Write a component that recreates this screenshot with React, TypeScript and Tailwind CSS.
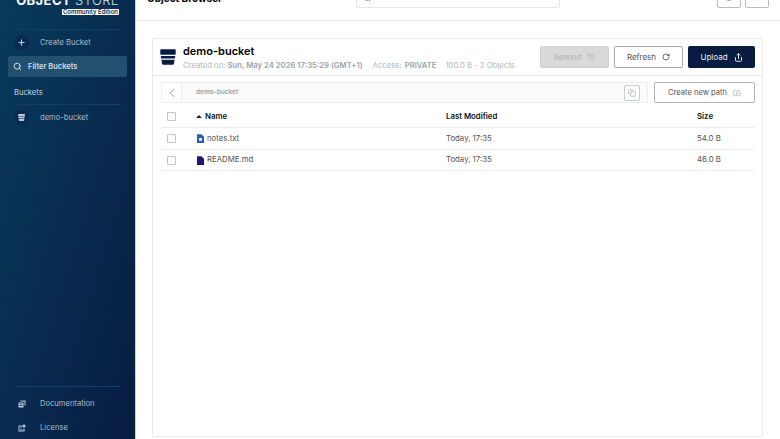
import { ChevronLeft, Copy, History, Plus, RotateCw, Search, Share, HelpCircle, User, FolderPlus } from 'lucide-react'

function BucketIcon({ className }: { className?: string }) {
  return (
    <svg viewBox="0 0 16 16" className={className} fill="currentColor">
      <path d="M0.3 1c0-.5.3-.8.8-.8h13.8c.5 0 .8.3.8.8v3.8l-.2.9H.5l-.2-.9z" />
      <path d="M.8 6.9h14.4l-.4 2.7H1.2z" />
      <path d="M1.4 10.8h13.2l-.7 4.2c-.1.5-.5.8-1 .8H3.1c-.5 0-.9-.3-1-.8z" />
    </svg>
  )
}

function DocsIcon({ className }: { className?: string }) {
  return (
    <svg viewBox="0 0 16 16" className={className} fill="currentColor">
      <path d="M5 1h10v10h-2V3H5z" />
      <path d="M1 5h10v10H1zm2 2v1.5h6V7zm0 3v1.5h6V10z" fillRule="evenodd" />
    </svg>
  )
}

function LicenseIcon({ className }: { className?: string }) {
  return (
    <svg viewBox="0 0 16 16" className={className} fill="currentColor">
      <path d="M1 3h8v2H3v8h8V9h2v6H1z" />
      <path d="M5 7h3v1.5H5zm0 3h4v1.5H5z" />
      <circle cx="12" cy="4" r="3" />
    </svg>
  )
}

function TextFileIcon({ className }: { className?: string }) {
  return (
    <svg viewBox="0 0 8 10" className={className} fill="currentColor">
      <path d="M0 0h5l3 3v7H0zM2.5 4.5v3h3v-3z" fillRule="evenodd" />
    </svg>
  )
}

function PlainFileIcon({ className }: { className?: string }) {
  return (
    <svg viewBox="0 0 8 10" className={className} fill="currentColor">
      <path d="M0 0h5l3 3v7H0z" />
    </svg>
  )
}

function SideIcon({ children }: { children: React.ReactNode }) {
  return (
    <span className="flex h-[15px] w-[15px] items-center justify-center rounded-full bg-[#0a2a55] text-[#b9c9d8]">
      {children}
    </span>
  )
}

function SideItem({ icon, label }: { icon: React.ReactNode; label: string }) {
  return (
    <div className="flex items-center pl-[14px]">
      <SideIcon>{icon}</SideIcon>
      <span className="ml-[11px] text-[7.6px] leading-none text-[#a9bccb]">{label}</span>
    </div>
  )
}

const files = [
  { name: 'notes.txt', color: 'text-[#2f5fa8]', modified: 'Today, 17:35', size: '54.0 B', Icon: TextFileIcon },
  { name: 'README.md', color: 'text-[#23156f]', modified: 'Today, 17:35', size: '46.0 B', Icon: PlainFileIcon },
]

export default function App() {
  return (
    <div className="flex h-[439px] w-[780px] overflow-hidden bg-white font-['Inter',sans-serif] text-[#32404d]">
      {/* Sidebar */}
      <aside className="flex h-full w-[136px] shrink-0 flex-col border-r border-[#c9cfdd] bg-gradient-to-br from-[#073b5c] to-[#081c42]">
        <div className="-mt-[8px] flex h-[24px] flex-col items-end pr-[16px]">
          <div className="whitespace-nowrap text-[13px] leading-[16px] tracking-[0.4px] text-white">
            <span className="font-bold">OBJECT</span> <span className="font-light text-[#d9e2ea]">STORE</span>
          </div>
          <div className="mt-[1px] rounded-[1px] bg-white px-[1px] text-[6px] font-semibold leading-[6px] text-[#1c2a3a]">
            Community Edition
          </div>
        </div>

        <div className="mx-[15px] mt-[13px] border-t border-[#10406a]" />
        <div className="mt-[5px]">
          <SideItem icon={<Plus className="h-[9px] w-[9px]" strokeWidth={3} />} label="Create Bucket" />
        </div>
        <div className="mx-[8px] mt-[6px] flex h-[21px] items-center rounded-[2px] bg-[#23506f] pl-[5px]">
          <Search className="h-[9px] w-[9px] text-[#d7e2ea]" strokeWidth={2.5} />
          <span className="ml-[6px] text-[7.5px] font-semibold leading-none text-[#d3dfe8]">Filter Buckets</span>
        </div>
        <div className="ml-[14px] mt-[10px] text-[7.6px] leading-[11px] text-[#c4d2de]">Buckets</div>
        <div className="mx-[14px] mt-[6px] border-t border-[#10406a]" />
        <div className="mt-[5px]">
          <SideItem icon={<BucketIcon className="h-[7px] w-[7px]" />} label="demo-bucket" />
        </div>

        <div className="mx-[14px] mt-auto border-t border-[#10406a]" />
        <div className="mb-[4px] mt-[9px] flex flex-col gap-[9px]">
          <SideItem icon={<DocsIcon className="h-[8px] w-[8px]" />} label="Documentation" />
          <SideItem icon={<LicenseIcon className="h-[8px] w-[8px]" />} label="License" />
        </div>
      </aside>

      {/* Main */}
      <main className="flex min-w-0 flex-1 flex-col">
        <header className="flex h-[21px] shrink-0 items-end border-b border-[#eaeaea] pb-[12px]">
          <div className="mb-[3px] ml-[11px] w-[209px] whitespace-nowrap text-[10px] font-bold leading-[14px] text-black">Object Browser</div>
          <div className="flex h-[20px] w-[204px] items-center rounded-b-[2px] border border-[#e5e5e5] pl-[6px]">
            <Search className="h-[8px] w-[8px] text-[#2f4a6b]" />
          </div>
          <div className="ml-auto mr-[11px] flex gap-[4px]">
            <span className="flex h-[24px] w-[24px] items-center justify-center rounded-[2px] border border-[#bcbcbc] text-[#555]">
              <HelpCircle className="h-[10px] w-[10px]" />
            </span>
            <span className="flex h-[24px] w-[24px] items-center justify-center rounded-[2px] border border-[#bcbcbc] text-[#333]">
              <User className="h-[10px] w-[10px]" fill="currentColor" />
            </span>
          </div>
        </header>

        <section className="ml-[16px] mr-[17px] mt-[17px] h-[399px] rounded-[2px] border border-[#eaeaea]">
          {/* Bucket header */}
          <div className="flex h-[37px] items-center border-b border-[#eaeaea] px-[7px]">
            <BucketIcon className="h-[16px] w-[16px] text-[#081c42]" />
            <div className="ml-[7px]">
              <div className="text-[11px] font-semibold leading-[14px] text-black">demo-bucket</div>
              <div className="mt-[3px] flex whitespace-nowrap text-[7.7px] leading-[10px] text-[#b0b7be]">
                <span>
                  Created on: <span className="font-semibold text-[#9aa3ab]">Sun, May 24 2026 17:35:29 (GMT+1)</span>
                </span>
                <span className="ml-[10px]">
                  Access: <span className="ml-[1px] font-semibold text-[#9aa3ab]">PRIVATE</span>
                </span>
                <span className="ml-[9px]">100.0 B - 2 Objects</span>
              </div>
            </div>
            <div className="ml-auto flex gap-[5px]">
              <button className="flex h-[22px] w-[69px] items-center justify-center gap-[6px] rounded-[2px] border border-[#d0d0d0] bg-[#d9d9d9] text-[8px] text-[#b4b4b4]">
                Rewind <History className="h-[8px] w-[8px]" />
              </button>
              <button className="flex h-[22px] w-[69px] items-center justify-center gap-[6px] rounded-[2px] border border-[#a9a9a9] bg-white text-[8px] text-[#555]">
                Refresh <RotateCw className="h-[8px] w-[8px]" strokeWidth={2.5} />
              </button>
              <button className="flex h-[22px] w-[67px] items-center justify-center gap-[6px] rounded-[2px] bg-[#081c42] text-[8px] text-[#e6eaf0]">
                Upload <Share className="h-[9px] w-[9px]" strokeWidth={2.5} />
              </button>
            </div>
          </div>

          {/* Path bar */}
          <div className="ml-[8px] mr-[7px] mt-[6px] flex items-center">
            <div className="flex h-[21px] flex-1 items-center rounded-[1px] border border-[#eeeeee] bg-[#fbfbfb]">
              <div className="flex h-full w-[20px] items-center justify-center border-r border-[#eeeeee] bg-white">
                <ChevronLeft className="h-[14px] w-[14px] text-[#8a8a8a]" strokeWidth={1.5} />
              </div>
              <span className="ml-[14px] text-[6.5px] font-semibold text-[#9aa3ab]">demo-bucket</span>
              <span className="ml-auto mr-[7px] flex h-[16px] w-[16px] items-center justify-center rounded-[2px] border border-[#c5ccd2] bg-white">
                <Copy className="h-[8px] w-[8px] text-[#a0a7ad]" />
              </span>
            </div>
            <button className="ml-[6px] flex h-[21px] w-[101px] items-center justify-center gap-[6px] rounded-[2px] border border-[#b5b5b5] bg-white text-[7.6px] text-[#555]">
              Create new path <FolderPlus className="h-[8px] w-[8px] text-[#aaa]" />
            </button>
          </div>

          {/* Table */}
          <div className="ml-[8px] mr-[7px] mt-[2px] text-[7.8px]">
            <div className="flex h-[23px] items-center border-b border-[#eeeeee] pt-[1px] font-semibold text-[#111]">
              <span className="ml-[6px] h-[9px] w-[9px] rounded-[1px] border border-[#c4c4c4]" />
              <div className="ml-[20px] flex w-[250px] items-center">
                <span className="mr-[3px] h-0 w-0 border-x-[3px] border-b-[3px] border-x-transparent border-b-[#222]" />
                Name
              </div>
              <div className="w-[251px]">Last Modified</div>
              <div>Size</div>
            </div>
            {files.map(file => (
              <div key={file.name} className="flex h-[21.5px] items-center border-b border-[#eeeeee] pt-[1px] text-[#555]">
                <span className="ml-[6px] h-[9px] w-[9px] rounded-[1px] border border-[#c4c4c4]" />
                <div className="ml-[21px] flex w-[249px] items-center">
                  <file.Icon className={`mr-[3px] h-[9px] w-[7px] ${file.color}`} />
                  {file.name}
                </div>
                <div className="w-[251px]">{file.modified}</div>
                <div>{file.size}</div>
              </div>
            ))}
          </div>
        </section>
      </main>
    </div>
  )
}
